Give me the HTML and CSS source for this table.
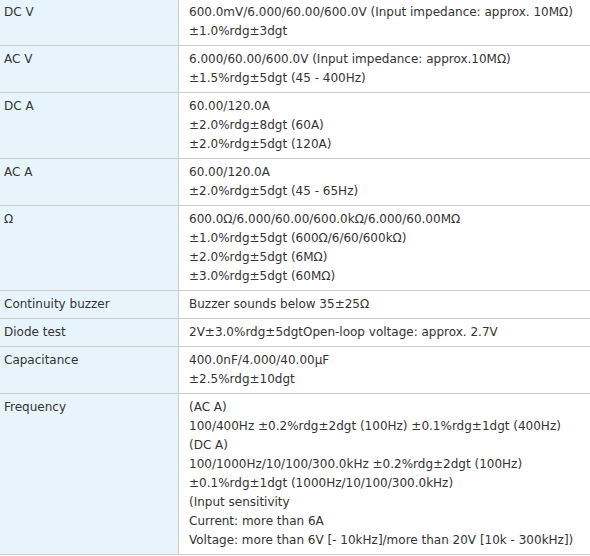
FILE: index.html
```html
<!DOCTYPE html>
<html lang="en">
<head>
<meta charset="utf-8">
<title>Specifications</title>
<link rel="stylesheet" href="styles.css">
</head>
<body>
<table class="spec">
  <tbody>
    <tr><th>DC V</th><td>600.0mV/6.000/60.00/600.0V (Input impedance: approx. 10MΩ)<br>±1.0%rdg±3dgt</td></tr>
    <tr><th>AC V</th><td>6.000/60.00/600.0V (Input impedance: approx.10MΩ)<br>±1.5%rdg±5dgt (45 - 400Hz)</td></tr>
    <tr><th>DC A</th><td>60.00/120.0A<br>±2.0%rdg±8dgt (60A)<br>±2.0%rdg±5dgt (120A)</td></tr>
    <tr><th>AC A</th><td>60.00/120.0A<br>±2.0%rdg±5dgt (45 - 65Hz)</td></tr>
    <tr><th>Ω</th><td>600.0Ω/6.000/60.00/600.0kΩ/6.000/60.00MΩ<br>±1.0%rdg±5dgt (600Ω/6/60/600kΩ)<br>±2.0%rdg±5dgt (6MΩ)<br>±3.0%rdg±5dgt (60MΩ)</td></tr>
    <tr><th>Continuity buzzer</th><td>Buzzer sounds below 35±25Ω</td></tr>
    <tr><th>Diode test</th><td>2V±3.0%rdg±5dgtOpen-loop voltage: approx. 2.7V</td></tr>
    <tr><th>Capacitance</th><td>400.0nF/4.000/40.00μF<br>±2.5%rdg±10dgt</td></tr>
    <tr><th>Frequency</th><td>(AC A)<br>100/400Hz ±0.2%rdg±2dgt (100Hz) ±0.1%rdg±1dgt (400Hz)<br>(DC A)<br>100/1000Hz/10/100/300.0kHz ±0.2%rdg±2dgt (100Hz)<br>±0.1%rdg±1dgt (1000Hz/10/100/300.0kHz)<br>(Input sensitivity<br>Current: more than 6A<br>Voltage: more than 6V [- 10kHz]/more than 20V [10k - 300kHz])</td></tr>
  </tbody>
</table>
</body>
</html>
```
FILE: styles.css
```css
html, body {
  margin: 0;
  padding: 0;
  background: #ffffff;
}
.spec {
  width: 100%;
  margin-top: -2px;
  border-collapse: collapse;
  font-family: "DejaVu Sans", Verdana, sans-serif;
  font-size: 12px;
  line-height: 19px;
  color: #333333;
}
.spec th,
.spec td {
  border-top: 1px solid #cccccc;
  border-bottom: 1px solid #cccccc;
  vertical-align: top;
  text-align: left;
  font-weight: normal;
  padding: 4px 4px 4px 10px;
}
.spec th {
  width: 170px;
  padding-left: 4px;
  background: #e8f4fc;
  border-right: 1px solid #cccccc;
}
```
